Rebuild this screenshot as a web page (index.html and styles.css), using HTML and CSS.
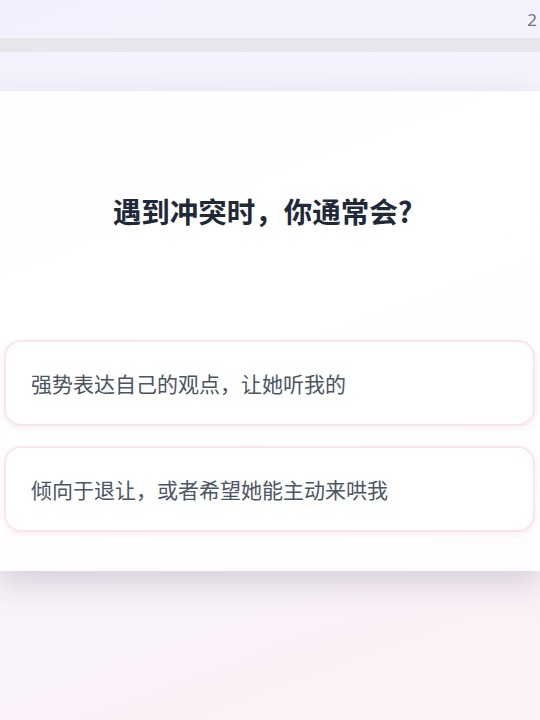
FILE: index.html
```html
<!DOCTYPE html>
<html lang="zh">
<head>
<meta charset="utf-8">
<link rel="stylesheet" href="styles.css">
</head>
<body>
<div class="page">
  <div class="header"><span class="count">2</span></div>
  <div class="progress"><div class="progress-fill"></div></div>
  <div class="card">
    <h1 class="title">遇到冲突时，你通常会?</h1>
    <div class="options">
      <div class="option">强势表达自己的观点，让她听我的</div>
      <div class="option">倾向于退让，或者希望她能主动来哄我</div>
    </div>
  </div>
</div>
</body>
</html>
```

FILE: styles.css
```css
html, body {
  margin: 0;
  padding: 0;
}
body {
  width: 540px;
  height: 720px;
  overflow: hidden;
  background: linear-gradient(160deg, #f1f1fd 0%, #f6f2fa 50%, #fcf1f6 100%);
  font-family: "Noto Sans CJK SC", "Noto Sans", sans-serif;
}
.page {
  display: flex;
  flex-direction: column;
}
.header {
  height: 38px;
  display: flex;
  justify-content: flex-end;
  align-items: center;
  padding-right: 3px;
  box-sizing: border-box;
}
.count {
  font-family: "Noto Sans", sans-serif;
  font-size: 17px;
  color: #6b7280;
  line-height: 1;
}
.progress {
  height: 14px;
  background: #e5e7eb;
}
.progress-fill {
  width: 0;
  height: 100%;
}
.card {
  margin-top: 39px;
  height: 480px;
  background: linear-gradient(160deg, #fdfdff 0%, #ffffff 40%, #fffcfe 100%);
  box-shadow: 0 12px 28px rgba(50, 40, 70, 0.17);
  padding: 0 5px 0 4px;
  box-sizing: border-box;
}
.title {
  margin: 0;
  padding-top: 101px;
  height: 38px;
  line-height: 38px;
  text-align: center;
  font-size: 28.5px;
  font-weight: 700;
  color: #1f2937;
  padding-right: 14px;
}
.options {
  margin-top: 110px;
  display: flex;
  flex-direction: column;
  gap: 20px;
}
.option {
  height: 86px;
  box-sizing: border-box;
  border: 2px solid #fbe4ef;
  border-radius: 17px;
  background: #ffffff;
  box-shadow: 0 2px 6px rgba(120, 80, 110, 0.08);
  display: flex;
  align-items: center;
  padding-left: 25px;
  font-size: 21px;
  color: #4b5563;
}
```
